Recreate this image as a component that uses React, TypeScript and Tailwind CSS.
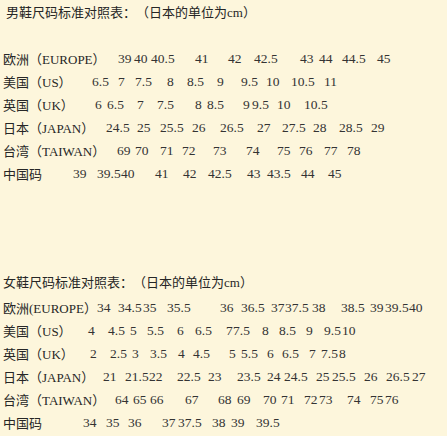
type Token = [string, number];
type Row = { label: string; nums: Token[] };

const men: Row[] = [
  {
    label: "欧洲（EUROPE）",
    nums: [["39", 118], ["40", 134], ["40.5", 151], ["41", 195], ["42", 228], ["42.5", 254], ["43", 300], ["44", 319], ["44.5", 342], ["45", 377]],
  },
  {
    label: "美国（US）",
    nums: [["6.5", 92], ["7", 118], ["7.5", 135], ["8", 167], ["8.5", 187], ["9", 217], ["9.5", 241], ["10", 266], ["10.5", 291], ["11", 324]],
  },
  {
    label: "英国（UK）",
    nums: [["6", 95], ["6.5", 107], ["7", 137], ["7.5", 157], ["8", 195], ["8.5", 207], ["9", 243], ["9.5", 252], ["10", 277], ["10.5", 304]],
  },
  {
    label: "日本（JAPAN）",
    nums: [["24.5", 106], ["25", 137], ["25.5", 160], ["26", 192], ["26.5", 220], ["27", 257], ["27.5", 282], ["28", 313], ["28.5", 339], ["29", 371]],
  },
  {
    label: "台湾（TAIWAN）",
    nums: [["69", 117], ["70", 135], ["71", 160], ["72", 182], ["73", 213], ["74", 246], ["75", 277], ["76", 299], ["77", 324], ["78", 347]],
  },
  {
    label: "中国码",
    nums: [["39", 73], ["39.5", 97], ["40", 121], ["41", 155], ["42", 183], ["42.5", 208], ["43", 247], ["43.5", 267], ["44", 301], ["45", 328]],
  },
];

const women: Row[] = [
  {
    label: "欧洲(EUROPE）",
    nums: [["34", 97], ["34.5", 118], ["35", 143], ["35.5", 167], ["36", 220], ["36.5", 241], ["37", 271], ["37.5", 285], ["38", 312], ["38.5", 341], ["39", 370], ["39.5", 385], ["40", 409]],
  },
  {
    label: "美国（US）",
    nums: [["4", 88], ["4.5", 108], ["5", 130], ["5.5", 147], ["6", 177], ["6.5", 195], ["7", 226], ["7.5", 233], ["8", 262], ["8.5", 279], ["9", 306], ["9.5", 324], ["10", 342]],
  },
  {
    label: "英国（UK）",
    nums: [["2", 90], ["2.5", 110], ["3", 132], ["3.5", 150], ["4", 178], ["4.5", 193], ["5", 229], ["5.5", 241], ["6", 267], ["6.5", 282], ["7", 309], ["7.5", 321], ["8", 339]],
  },
  {
    label: "日本（JAPAN）",
    nums: [["21", 103], ["21.5", 125], ["22", 149], ["22.5", 177], ["23", 208], ["23.5", 237], ["24", 267], ["24.5", 284], ["25", 316], ["25.5", 332], ["26", 364], ["26.5", 386], ["27", 412]],
  },
  {
    label: "台湾（TAIWAN）",
    nums: [["64", 115], ["65", 133], ["66", 150], ["67", 185], ["68", 218], ["69", 237], ["70", 263], ["71", 281], ["72", 304], ["73", 319], ["74", 347], ["75", 370], ["76", 385]],
  },
  {
    label: "中国码",
    nums: [["34", 83], ["35", 106], ["36", 128], ["37", 162], ["37.5", 178], ["38", 212], ["39", 231], ["39.5", 256]],
  },
];

// row text starts at x=3 (page padding)
const SizeRow = ({ row }: { row: Row }) => {
  const first = row.nums[0][1];
  return (
    <div className="flex h-[23px] items-center whitespace-nowrap">
      <span className="shrink-0 text-[13px] text-[#262626]" style={{ width: first - 3 }}>
        {row.label}
      </span>
      {row.nums.map(([n, x], i) => {
        const next = row.nums[i + 1];
        return (
          <span
            key={i}
            className="shrink-0 text-[13.5px] text-[#333333]"
            style={next ? { width: next[1] - x } : undefined}
          >
            {n}
          </span>
        );
      })}
    </div>
  );
};

export default function App() {
  return (
    <div
      className="h-[436px] w-[447px] overflow-hidden bg-[#fdf6dc] pl-[3px] pt-[1px] [text-spacing-trim:space-all]"
      style={{ fontFamily: '"Liberation Serif", "Noto Sans CJK SC", serif' }}
    >
      <div className="h-[23px] pl-[3px] text-[13px] leading-[23px] text-[#262626]">
        男鞋尺码标准对照表：（日本的单位为cm）
      </div>
      <div className="mt-[24px]">
        {men.map((r) => (
          <SizeRow key={r.label} row={r} />
        ))}
      </div>

      <div className="mt-[85px] h-[23px] text-[13px] leading-[23px] text-[#262626]">
        女鞋尺码标准对照表：（日本的单位为cm）
      </div>
      <div className="mt-[3px]">
        {women.map((r) => (
          <SizeRow key={r.label} row={r} />
        ))}
      </div>
    </div>
  );
}
